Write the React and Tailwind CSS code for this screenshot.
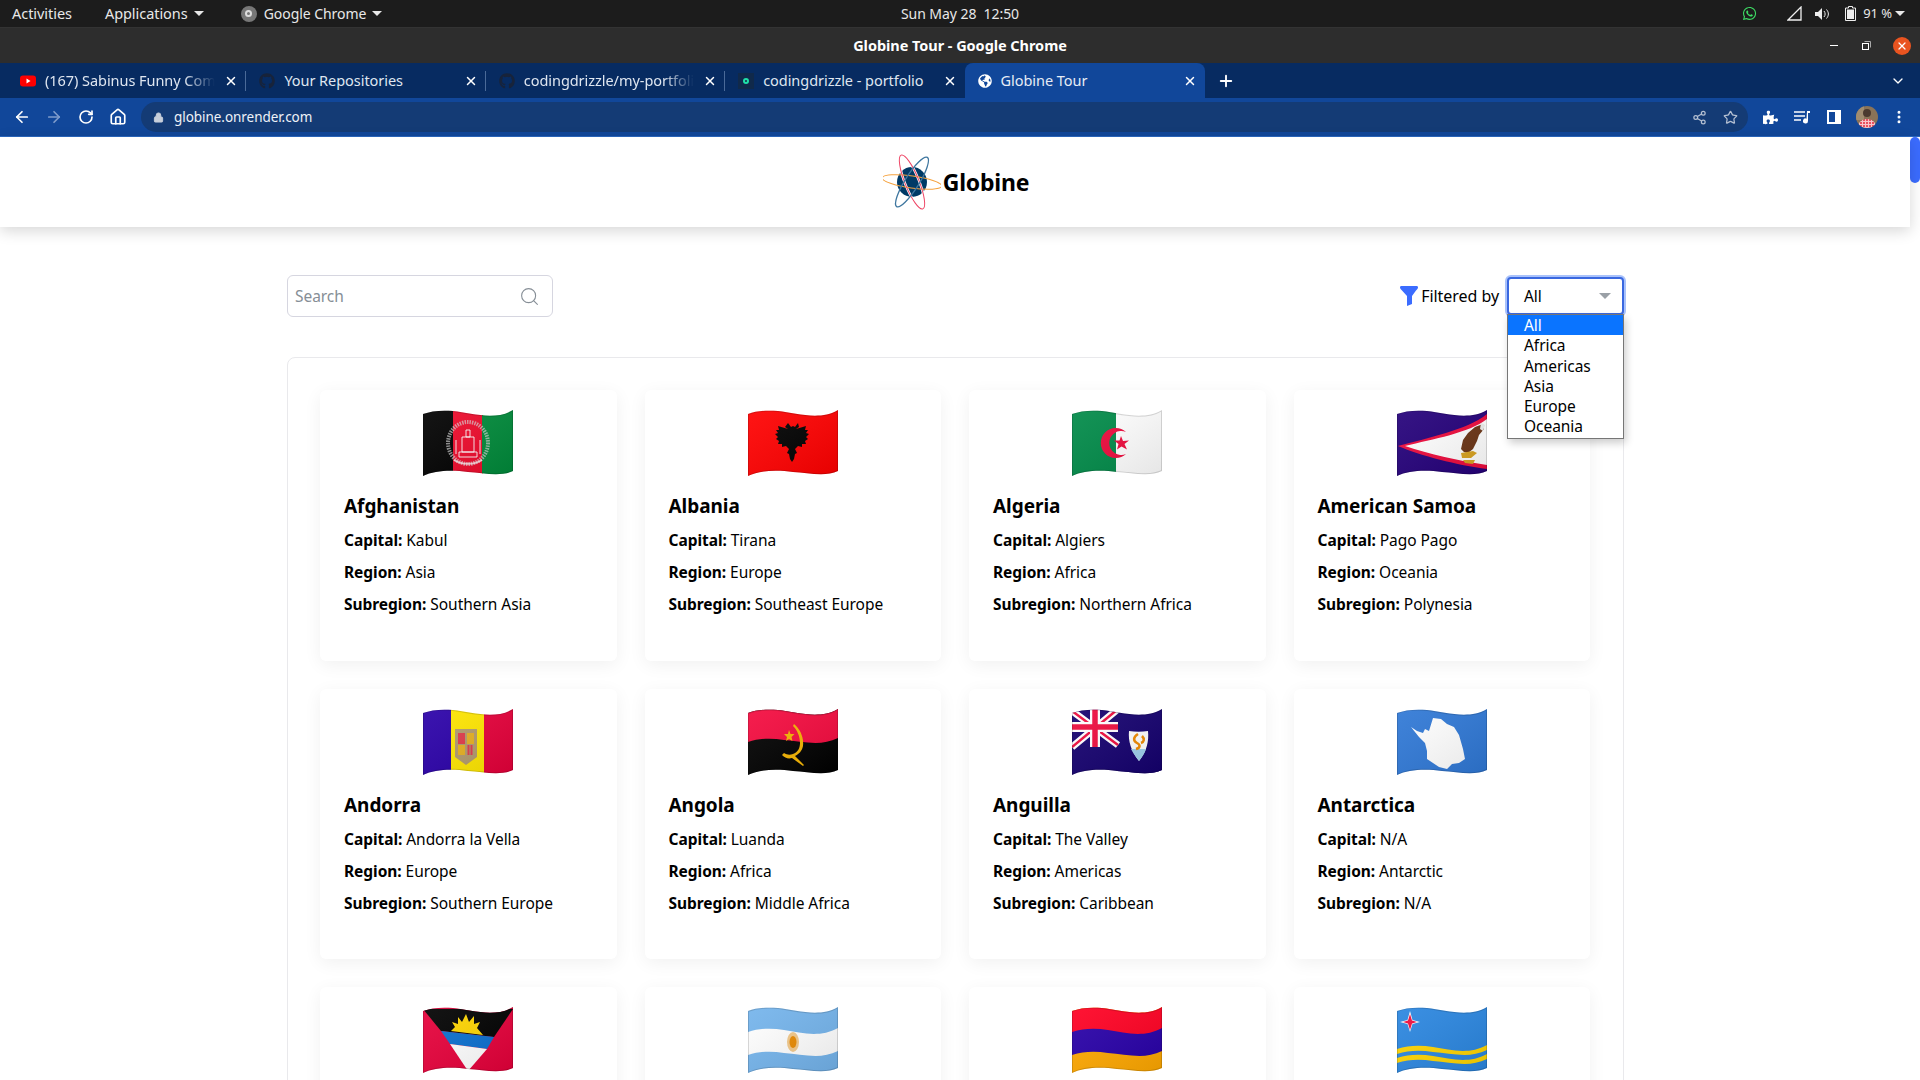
import {
  ArrowLeft,
  ArrowRight,
  ChevronDown,
  Home,
  Lock,
  MoreVertical,
  Plus,
  RotateCw,
  Search,
  Share2,
  Star,
  X,
} from "lucide-react";
import { FaGithub, FaGlobeAmericas, FaPuzzlePiece, FaWhatsapp } from "react-icons/fa";

const WAVE = "M0 4C8 1 18 0 30 1C48 3 72 11 90 0V61C78 67 60 63 45 62C30 60 12 60 0 66Z";

// one horizontal band that follows the wave of the flag
function band(y0, y1) {
  return `M0 ${y0 + 4}C12 ${y0} 24 ${y0} 36 ${y0 + 2}C54 ${y0 + 5} 72 ${y0 + 10} 90 ${y0}V${y1}C72 ${y1 + 9} 54 ${y1 + 3} 36 ${y1 + 2}C24 ${y1} 12 ${y1} 0 ${y1 + 4}Z`;
}

function Flag({ id, children }) {
  return (
    <svg width="90" height="66" viewBox="0 0 90 66" className="block mx-auto">
      <defs>
        <clipPath id={`clip-${id}`}>
          <path d={WAVE} />
        </clipPath>
        <linearGradient id={`shade-${id}`} x1="0" y1="0" x2="1" y2="1">
          <stop offset="0" stopColor="#fff" stopOpacity="0.08" />
          <stop offset="1" stopColor="#000" stopOpacity="0.1" />
        </linearGradient>
      </defs>
      <g clipPath={`url(#clip-${id})`}>
        {children}
        <rect width="90" height="66" fill={`url(#shade-${id})`} />
        <path d={WAVE} fill="none" stroke="#000" strokeOpacity="0.14" strokeWidth="2" />
      </g>
    </svg>
  );
}

const flags = {
  Afghanistan: (
    <Flag id="af">
      <rect width="30" height="66" fill="#000" />
      <rect x="30" width="30" height="66" fill="#ee0a2b" />
      <rect x="59" width="31" height="66" fill="#008a3a" />
      <ellipse cx="45" cy="33" rx="20" ry="21" fill="none" stroke="#d8d8d8" strokeWidth="4" strokeDasharray="1.500 1" opacity="0.65" />
      <path d="M36 42h18v5H36zM39 27h12v15H39zM43 20h4v7h-4zM33 30v14M57 30v14" fill="none" stroke="#fff" strokeWidth="1" opacity="0.9" />
      <path d="M31 50c8 5 20 5 28 0" fill="none" stroke="#fff" strokeWidth="2" opacity="0.7" />
    </Flag>
  ),
  Albania: (
    <Flag id="al">
      <rect width="90" height="66" fill="#ff0000" />
      <path d="M40 13l3 4 2-1 2 1 3-4 1 4-3 2 10-3-1 4 3 0-2 3 3 1-3 3 2 2-3 2 1 3-4 0 0 3-4-1-3 3 2 4-2 1-1 5-2 3-2-3-1-5-2-1 2-4-3-3-4 1 0-3-4 0 1-3-3-2 2-2-3-3 3-1-2-3 3 0-1-4 10 3-3-2z" fill="#000" />
    </Flag>
  ),
  Algeria: (
    <Flag id="dz">
      <rect width="90" height="66" fill="#fff" />
      <rect width="44" height="66" fill="#008a48" />
      <path d="M54 22A15 15 0 1 0 54 44A12 12 0 1 1 54 22Z" fill="#ee0a3c" />
      <path d="M49 26l2 5 6-.5-4.500 3.500 2.500 5.500-5.500-3-4.500 3 1.500-5.500-4.500-3.500h5.500z" fill="#ee0a3c" />
    </Flag>
  ),
  "American Samoa": (
    <Flag id="as">
      <rect width="90" height="66" fill="#24007a" />
      <path d="M1 36C30 28 70 20 90 4V59C60 55 24 46 1 36Z" fill="#ee0a3c" />
      <path d="M8 36C36 29 72 23 90 9V55C62 51 32 44 8 36Z" fill="#fff" />
      <path d="M86 14l-8 3-7 6-5 7-2 9 3 3 4 1 5-4 4-8 2-6 5-6z" fill="#6b3415" />
      <path d="M64 43l12-2 4 2-6 5-9 0zM66 50h12l-2 4-8-1z" fill="#d9a320" />
      <path d="M84 13l4 2-2 6-3-2z" fill="#eee" />
    </Flag>
  ),
  Andorra: (
    <Flag id="ad">
      <rect width="28" height="66" fill="#2a00a8" />
      <rect x="28" width="33" height="66" fill="#ffe600" />
      <rect x="61" width="29" height="66" fill="#e6003a" />
      <path d="M32 20h22v28l-11 8-11-8z" fill="#b29a6c" />
      <rect x="35" y="24" width="7" height="11" fill="#e03a4a" />
      <rect x="44" y="24" width="7" height="11" fill="#e6b020" />
      <rect x="35" y="36" width="7" height="10" fill="#e6b020" />
      <path d="M45.500 36v10M48.500 36v10" stroke="#e03a4a" strokeWidth="2" />
    </Flag>
  ),
  Angola: (
    <Flag id="ao">
      <rect width="90" height="66" fill="#000" />
      <path d={band(-6, 29)} fill="#f40a3e" />
      <path d="M46 15c6 5 10 13 9 22c-1 5-4 8-8 10l9 9-1 1-11-8c-4 1-7 0-10-3l2-2c3 2 6 2 9 1c5-2 7-6 7-11c0-7-3-13-7-17z" fill="#f5b400" />
      <path d="M41 21l1.500 4 4 0-3 3 1 4-3.500-2-3 2 1-4-3-3 4 0z" fill="#f5b400" />
    </Flag>
  ),
  Anguilla: (
    <Flag id="ai">
      <rect width="90" height="66" fill="#14006e" />
      <path d="M0 2L46 36M46 0L0 38" stroke="#fff" strokeWidth="7" />
      <path d="M0 2L46 36M46 0L0 38" stroke="#ee0a3c" strokeWidth="2.500" />
      <path d="M23 0V38M0 18H46" stroke="#fff" strokeWidth="10" />
      <path d="M23 0V38M0 18H46" stroke="#ee0a3c" strokeWidth="5.500" />
      <path d="M46 36H90V66H46z" fill="#14006e" />
      <path d="M57 22c6 1 13 1 19 0c1 10-1 20-9 30c-8-10-11-20-10-30z" fill="#fff" />
      <path d="M59 40h15c-1 4-4 8-7 12c-3-4-6-8-8-12z" fill="#9fd0ee" />
      <path d="M66 25c-5 3-5 7-1 9c4 2 3 5-1 6M70 27c3 3 2 6-1 7" fill="none" stroke="#f08a00" strokeWidth="2.500" />
    </Flag>
  ),
  Antarctica: (
    <Flag id="aq">
      <rect width="90" height="66" fill="#2f78d6" />
      <path d="M36 9L44 10L50 15L57 18L62 26L66 40L68 50L62 54L55 55L50 60L42 58L36 54L30 50L30 42L28 34L22 28L14 18L20 22L26 24L28 20L32 22Z" fill="#fff" />
    </Flag>
  ),
  "Antigua and Barbuda": (
    <Flag id="ag">
      <rect width="90" height="66" fill="#e6003a" />
      <path d="M0 2H90L71 30L18 24Z" fill="#000" />
      <path d="M28 24L32 20L29 15L35 17L35 10L39 15L43 7L46 15L51 9L51 17L57 15L54 21L60 28Z" fill="#ffd500" />
      <path d="M18 24L71 30L64 42L27 37Z" fill="#0a6fd0" />
      <path d="M27 37L64 42L45 64Z" fill="#fff" />
    </Flag>
  ),
  Argentina: (
    <Flag id="ar">
      <rect width="90" height="66" fill="#74b4ec" />
      <path d={band(21, 44)} fill="#fff" />
      <ellipse cx="45" cy="35" rx="6" ry="10" fill="#f3c98a" />
      <ellipse cx="45" cy="35" rx="3.500" ry="6" fill="#e98a00" />
    </Flag>
  ),
  Armenia: (
    <Flag id="am">
      <rect width="90" height="66" fill="#ffa800" />
      <rect width="90" height="30" fill="#ff0022" />
      <path d={band(21, 44)} fill="#2800a8" />
    </Flag>
  ),
  Aruba: (
    <Flag id="aw">
      <rect width="90" height="66" fill="#2a86e0" />
      <path d="M13 4L15.500 13L23 15L15.500 17L13 25L10.500 17L3 15L10.500 13Z" fill="#fff" />
      <path d="M13 7L15 13.500L20 15L15 16.500L13 23L11 16.500L6 15L11 13.500Z" fill="#ee0a3c" />
      <path d={band(38, 43)} fill="#ffd500" />
      <path d={band(47, 52)} fill="#ffd500" />
    </Flag>
  ),
};

const countries = [
  { name: "Afghanistan", capital: "Kabul", region: "Asia", subregion: "Southern Asia" },
  { name: "Albania", capital: "Tirana", region: "Europe", subregion: "Southeast Europe" },
  { name: "Algeria", capital: "Algiers", region: "Africa", subregion: "Northern Africa" },
  { name: "American Samoa", capital: "Pago Pago", region: "Oceania", subregion: "Polynesia" },
  { name: "Andorra", capital: "Andorra la Vella", region: "Europe", subregion: "Southern Europe" },
  { name: "Angola", capital: "Luanda", region: "Africa", subregion: "Middle Africa" },
  { name: "Anguilla", capital: "The Valley", region: "Americas", subregion: "Caribbean" },
  { name: "Antarctica", capital: "N/A", region: "Antarctic", subregion: "N/A" },
  { name: "Antigua and Barbuda", capital: "Saint John's", region: "Americas", subregion: "Caribbean" },
  { name: "Argentina", capital: "Buenos Aires", region: "Americas", subregion: "South America" },
  { name: "Armenia", capital: "Yerevan", region: "Asia", subregion: "Western Asia" },
  { name: "Aruba", capital: "Oranjestad", region: "Americas", subregion: "Caribbean" },
];

const tabs = [
  { title: "(167) Sabinus Funny Comedy", icon: "yt", fade: true },
  { title: "Your Repositories", icon: "gh" },
  { title: "codingdrizzle/my-portfolio", icon: "gh", fade: true },
  { title: "codingdrizzle - portfolio", icon: "dot" },
];

function TabIcon({ kind }) {
  if (kind === "yt") {
    return (
      <svg width="16" height="12" viewBox="0 0 16 12" className="shrink-0">
        <rect width="16" height="11" y="0.5" rx="3" fill="#f00" />
        <path d="M6.500 3.500l4 2.500-4 2.500z" fill="#fff" />
      </svg>
    );
  }
  if (kind === "gh") return <FaGithub className="shrink-0 text-[16px] text-[#17233a]" />;
  return (
    <span className="shrink-0 w-[16px] h-[16px] bg-[#10294a] flex items-center justify-center">
      <span className="w-[6px] h-[6px] rounded-full border-2 border-[#1fe0a8]" />
    </span>
  );
}

function Tab({ tab, last }) {
  return (
    <div className="w-[239.4px] h-full flex items-center pl-[13px] pr-[8px] gap-[9px] relative">
      <TabIcon kind={tab.icon} />
      <span
        className={
          tab.fade
            ? "flex-1 overflow-hidden whitespace-nowrap text-[14.5px] text-[#dfe6f0] [mask-image:linear-gradient(to_right,black_82%,transparent)]"
            : "flex-1 overflow-hidden whitespace-nowrap text-[14.5px] text-[#dfe6f0]"
        }
      >
        {tab.title}
      </span>
      <X size={14} strokeWidth={2.5} className="shrink-0 text-white" />
      {!last && <span className="absolute right-0 top-[8px] w-px h-[20px] bg-[#4a6a98]" />}
    </div>
  );
}

function TopBar() {
  return (
    <div className="h-[27px] bg-[#1c1c1c] grid grid-cols-3 items-center text-[14.5px] text-[#e8e8e8] px-[12px]">
      <div className="flex items-center">
        <span>Activities</span>
        <span className="ml-[33px]">Applications</span>
        <span className="ml-[6px] w-0 h-0 border-x-[5px] border-x-transparent border-t-[5px] border-t-[#e8e8e8]" />
        <span className="ml-[37px] w-[16px] h-[16px] rounded-full bg-[#777] flex items-center justify-center">
          <span className="w-[7px] h-[7px] rounded-full border-2 border-[#ddd]" />
        </span>
        <span className="ml-[7px] text-[14px]">Google Chrome</span>
        <span className="ml-[6px] w-0 h-0 border-x-[5px] border-x-transparent border-t-[5px] border-t-[#e8e8e8]" />
      </div>
      <div className="text-center text-[14px]">Sun May 28&nbsp; 12:50</div>
      <div className="flex items-center justify-end pr-[3px]">
        <FaWhatsapp className="text-[15px] text-[#3ddc64]" />
        <svg width="15" height="15" viewBox="0 0 15 15" className="ml-[30px]">
          <path d="M14 1V14H1Z" fill="none" stroke="#eee" strokeWidth="1.3" />
        </svg>
        <svg width="15" height="14" viewBox="0 0 15 14" className="ml-[13px]">
          <path d="M0 5h3l4-4v12l-4-4H0z" fill="#eee" />
          <path d="M9 4c1.500 2 1.500 4 0 6M11.500 2.500c2.500 3 2.500 6 0 9" fill="none" stroke="#eee" />
        </svg>
        <svg width="11" height="15" viewBox="0 0 11 15" className="ml-[15px]">
          <path d="M3.500 0.5h4v1.500h3v12.500h-10V2h3z" fill="none" stroke="#eee" />
          <rect x="2" y="3.500" width="7" height="9.500" fill="#eee" />
        </svg>
        <span className="ml-[7px] text-[13px] text-[#e8e8e8]">91 %</span>
        <span className="ml-[3px] w-0 h-0 border-x-[5px] border-x-transparent border-t-[5px] border-t-[#e8e8e8]" />
      </div>
    </div>
  );
}

function TitleBar() {
  return (
    <div className="h-[36px] bg-[#2d2d2d] border-t border-[#333] grid grid-cols-3 items-center">
      <div />
      <div className="text-center text-[14.5px] font-bold text-white">Globine Tour - Google Chrome</div>
      <div className="flex items-center justify-end pr-[9px]">
        <span className="w-[8px] h-px bg-white" />
        <svg width="9" height="9" viewBox="0 0 9 9" className="ml-[24px]">
          <path d="M2.500 0.5h6v6" fill="none" stroke="#aaa" />
          <rect x="0.5" y="2.500" width="6" height="6" fill="none" stroke="#fff" />
        </svg>
        <span className="ml-[22px] w-[18px] h-[18px] rounded-full bg-[#e95420] flex items-center justify-center">
          <X size={12} strokeWidth={2.5} className="text-white" />
        </span>
      </div>
    </div>
  );
}

function TabStrip() {
  return (
    <div className="h-[35px] bg-[#072b61] flex items-center pl-[7px]">
      {tabs.map((tab, i) => (
        <Tab key={tab.title} tab={tab} last={i === tabs.length - 1} />
      ))}
      <div className="w-[240px] h-full bg-[#11479a] rounded-t-[8px] flex items-center pl-[13px] pr-[8px] gap-[9px]">
        <FaGlobeAmericas className="shrink-0 text-[14px] text-white" />
        <span className="flex-1 whitespace-nowrap text-[14.5px] text-[#e6ecf5]">Globine Tour</span>
        <X size={14} strokeWidth={2.5} className="shrink-0 text-white" />
      </div>
      <Plus size={18} strokeWidth={2.5} className="ml-[12px] text-white" />
      <ChevronDown size={16} strokeWidth={2} className="ml-auto mr-[14px] text-white" />
    </div>
  );
}

function Toolbar() {
  return (
    <div className="h-[39px] bg-[#11479a] border-b border-[#2a68c0] flex items-center pl-[13px] pr-[13px]">
      <ArrowLeft size={18} strokeWidth={2.25} className="text-white" />
      <ArrowRight size={18} strokeWidth={2.25} className="ml-[14px] text-[#7f9ccb]" />
      <RotateCw size={16} strokeWidth={2.5} className="ml-[15px] text-white" />
      <Home size={18} strokeWidth={2.25} className="ml-[15px] text-white" />
      <div className="ml-[14px] flex-1 h-[30px] rounded-full bg-[#143b75] flex items-center pl-[12px] pr-[10px]">
        <Lock size={11} fill="#c7cfdb" className="text-[#c7cfdb]" />
        <span className="ml-[10px] text-[13.5px] text-[#eef2f8]">globine.onrender.com</span>
        <Share2 size={15} className="ml-auto text-[#b5c0d2]" />
        <Star size={15} className="ml-[16px] text-[#b5c0d2]" />
      </div>
      <FaPuzzlePiece className="ml-[15px] text-[15px] text-white" />
      <svg width="16" height="14" viewBox="0 0 16 14" className="ml-[16px]">
        <path d="M0 2h11M0 6h11M0 10h7" stroke="#fff" strokeWidth="1.5" />
        <path d="M13 1h3v2h-2v8a2.500 2.500 0 1 1-1.500-2.300z" fill="#fff" />
      </svg>
      <svg width="14" height="14" viewBox="0 0 14 14" className="ml-[17px]">
        <path d="M0 0H14V14H0zM2 2V12H8V2z" fill="#fff" fillRule="evenodd" />
      </svg>
      <svg width="22" height="22" viewBox="0 0 22 22" className="ml-[15px]">
        <defs>
          <clipPath id="avatar-clip">
            <circle cx="11" cy="11" r="11" />
          </clipPath>
          <pattern id="check" width="3" height="3" patternUnits="userSpaceOnUse">
            <rect width="3" height="3" fill="#e8505f" />
            <rect width="1" height="3" fill="#f7c4ca" />
            <rect width="3" height="1" fill="#f7c4ca" />
          </pattern>
        </defs>
        <g clipPath="url(#avatar-clip)">
          <rect width="22" height="22" fill="#8a7358" />
          <rect width="8" height="14" fill="#a08c70" />
          <circle cx="11" cy="7" r="4" fill="#4b3a30" />
          <path d="M2 22c0-6 4-9 9-9s9 3 9 9z" fill="url(#check)" />
        </g>
      </svg>
      <MoreVertical size={16} strokeWidth={2.5} className="ml-[13px] text-white" />
    </div>
  );
}

function Logo() {
  return (
    <svg width="58" height="58" viewBox="0 0 58 58" className="shrink-0">
      <circle cx="29" cy="29" r="15" fill="#003a66" />
      <ellipse cx="29" cy="29" rx="29" ry="7" transform="rotate(68 29 29)" fill="none" stroke="#fff" strokeWidth="2.5" />
      <ellipse cx="29" cy="29" rx="30" ry="6" transform="rotate(8 29 29)" fill="none" stroke="#f5a340" strokeWidth="1" />
      <ellipse cx="29" cy="29" rx="29" ry="7" transform="rotate(68 29 29)" fill="none" stroke="#ee4565" strokeWidth="1" />
      <ellipse cx="29" cy="29" rx="29" ry="7" transform="rotate(-58 29 29)" fill="none" stroke="#3e769f" strokeWidth="1.3" />
    </svg>
  );
}

function FilterIcon() {
  return (
    <svg width="18" height="20" viewBox="0 0 18 20" className="shrink-0">
      <path d="M0 1.500C0 .5.5 0 1.500 0h15c1 0 1.500.5 1.500 1.500 0 1-1 2-2 3L12 10v8l-5 2V10L2 4.500C1 3.500 0 2.500 0 1.500z" fill="#3b6cff" />
    </svg>
  );
}

function CountryCard({ country }) {
  return (
    <div className="h-[270.6px] bg-white rounded-[6px] shadow-[0_4px_18px_rgba(0,0,0,0.06)] pt-[20px] px-[24px]">
      {flags[country.name]}
      <h3 className="mt-[16px] text-[19px] leading-[28px] font-bold">{country.name}</h3>
      <p className="mt-[4px] leading-[32px]">
        <b>Capital:</b> {country.capital}
      </p>
      <p className="leading-[32px]">
        <b>Region:</b> {country.region}
      </p>
      <p className="leading-[32px]">
        <b>Subregion:</b> {country.subregion}
      </p>
    </div>
  );
}

function RegionSelect() {
  const options = ["All", "Africa", "Americas", "Asia", "Europe", "Oceania"];
  return (
    <div className="relative w-[117px]">
      <div className="h-[38px] rounded-[4px] border-2 border-[#3a68e0] ring-2 ring-[#a9c2fb] flex items-center pl-[15px] pr-[11px] bg-white">
        <span>All</span>
        <span className="ml-auto w-0 h-0 border-x-[6px] border-x-transparent border-t-[6px] border-t-[#9aa0a6]" />
      </div>
      <ul className="absolute left-0 top-[37px] z-10 w-full pb-px bg-white border border-[#767676] shadow-[2px_4px_8px_rgba(0,0,0,0.2)]">
        {options.map((o, i) => (
          <li
            key={o}
            className={
              i === 0
                ? "h-[20.3px] leading-[20px] pl-[16px] bg-[#0a74ff] text-white"
                : "h-[20.3px] leading-[20px] pl-[16px] text-black"
            }
          >
            {o}
          </li>
        ))}
      </ul>
    </div>
  );
}

export default function App() {
  return (
    <div className="h-screen overflow-hidden flex flex-col bg-white text-black text-[15.5px] tracking-[-0.05px] font-['Noto_Sans',sans-serif]">
      <TopBar />
      <TitleBar />
      <TabStrip />
      <Toolbar />
      <div className="flex-1 min-h-0 flex">
        <main className="flex-1 min-w-0">
          <header className="relative h-[90px] bg-white shadow-[0_4px_14px_rgba(0,0,0,0.16)] flex items-center justify-center pl-[2px]">
            <Logo />
            <span className="ml-[2px] text-[23px] font-bold tracking-[-0.2px]">Globine</span>
          </header>
          <section className="pl-[287px] w-[1624px] pt-[48px] leading-[24px]">
            <div className="flex items-center justify-between">
              <div className="w-[266px] h-[42px] rounded-[6px] border border-[#d6d6e0] flex items-center pl-[7px] pr-[12px]">
                <span className="text-[#868e96]">Search</span>
                <Search size={21} strokeWidth={1.25} className="ml-auto text-[#868e96]" />
              </div>
              <div className="flex items-center">
                <FilterIcon />
                <span className="ml-[3px] mr-[8px] text-[16px]">Filtered by</span>
                <RegionSelect />
              </div>
            </div>
            <div className="mt-[40px] border border-[#e9e9ec] rounded-[8px] pt-[32px] pl-[32px] pr-[33px] grid grid-cols-4 gap-x-[28px] gap-y-[28px]">
              {countries.map((c) => (
                <CountryCard key={c.name} country={c} />
              ))}
            </div>
          </section>
        </main>
        <div className="w-[10px] shrink-0">
          <div className="h-[46px] rounded-full bg-[#3b6cff]" />
        </div>
      </div>
    </div>
  );
}
